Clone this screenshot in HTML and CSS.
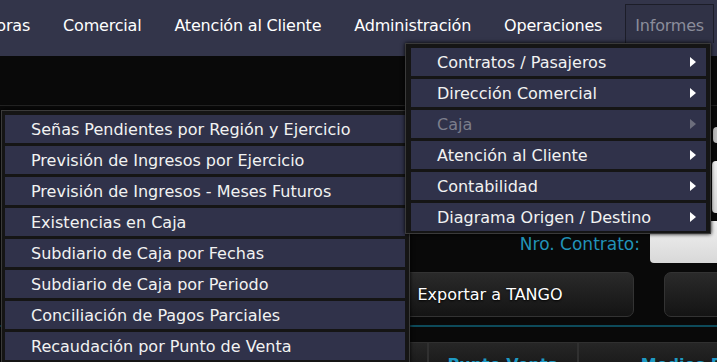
FILE: index.html
```html
<!DOCTYPE html>
<html lang="es">
<head>
  <meta charset="UTF-8">
  <title>Informes - Caja</title>
  <link rel="stylesheet" href="styles.css">
</head>
<body>
  <!-- Barra de navegacion -->
  <header class="nav">
    <a href="#" class="nav-item">Operadoras</a>
    <a href="#" class="nav-item">Comercial</a>
    <a href="#" class="nav-item">Atención al Cliente</a>
    <a href="#" class="nav-item">Administración</a>
    <a href="#" class="nav-item">Operaciones</a>
    <a href="#" class="nav-item active">Informes</a>
  </header>

  <main class="content">
    <div class="band"></div>
    <section class="form">
      <div class="row row-a"><span class="field field-sm"></span></div>
      <div class="row row-b"><span class="field field-md"></span></div>
      <div class="row row-c">
        <label class="label">Nro. Contrato:</label>
        <span class="field field-contrato"></span>
      </div>
      <div class="buttons">
        <button class="btn">Exportar a TANGO</button>
        <button class="btn"></button>
      </div>
      <div class="rule"></div>
      <div class="grid-head">
        <div class="cell cell-first"></div>
        <div class="cell">Punto Venta</div>
        <div class="cell">Medios Pago</div>
      </div>
    </section>
  </main>

  <!-- Menu desplegable Informes -->
  <ul class="menu menu-informes">
    <li class="menu-item">Contratos / Pasajeros <span class="arrow"></span></li>
    <li class="menu-item">Dirección Comercial <span class="arrow"></span></li>
    <li class="menu-item disabled">Caja <span class="arrow"></span></li>
    <li class="menu-item">Atención al Cliente <span class="arrow"></span></li>
    <li class="menu-item">Contabilidad <span class="arrow"></span></li>
    <li class="menu-item">Diagrama Origen / Destino <span class="arrow"></span></li>
  </ul>

  <!-- Submenu Caja -->
  <ul class="menu menu-caja">
    <li class="menu-item">Señas Pendientes por Región y Ejercicio</li>
    <li class="menu-item">Previsión de Ingresos por Ejercicio</li>
    <li class="menu-item">Previsión de Ingresos - Meses Futuros</li>
    <li class="menu-item">Existencias en Caja</li>
    <li class="menu-item">Subdiario de Caja por Fechas</li>
    <li class="menu-item">Subdiario de Caja por Periodo</li>
    <li class="menu-item">Conciliación de Pagos Parciales</li>
    <li class="menu-item">Recaudación por Punto de Venta</li>
  </ul>
</body>
</html>
```

FILE: styles.css
```css
* {
  margin: 0;
  padding: 0;
  box-sizing: border-box;
  font-family: 'DejaVu Sans', Verdana, sans-serif;
}

body {
  width: 717px;
  height: 362px;
  overflow: hidden;
  background-color: #0a0a0a;
  color: #f2f2f2;
  position: relative;
}

/* Navegacion */
.nav {
  height: 56px;
  display: flex;
  justify-content: flex-end;
  align-items: flex-start;
  gap: 13px;
  padding-right: 3px;
  background-color: #33354a;
  overflow: hidden;
}

.nav-item {
  flex-shrink: 0;
  height: 39px;
  margin-top: 4px;
  padding: 11px 9px 0;
  font-size: 16px;
  line-height: 20px;
  letter-spacing: -0.2px;
  color: #ffffff;
  text-decoration: none;
  border: 1px solid transparent;
  border-bottom: none;
}

.nav-item.active {
  color: #8b8d9b;
  border-color: #1c1d28;
  background-color: #303246;
}

/* Contenido de fondo */
.content {
  background-color: #090909;
}

.band {
  height: 50px;
  border-bottom: 1px solid #222222;
}

.form {
  display: flex;
  flex-direction: column;
  align-items: flex-end;
  padding-top: 21px;
}

.row {
  display: flex;
  align-items: center;
  justify-content: flex-end;
}

.field {
  display: block;
  background: linear-gradient(#f2f2f2, #d8d8d8);
  border-radius: 4px;
}

.field-sm {
  width: 10px;
  height: 16px;
  margin-right: -6px;
  background: #bdbdbd;
}

.row-b {
  margin-top: 18px;
}

.field-md {
  width: 10px;
  height: 52px;
  margin-right: -5px;
}

.row-c {
  margin-top: 8px;
  gap: 10px;
}

.label {
  font-size: 17px;
  color: #2192b8;
  padding-top: 4px;
}

.field-contrato {
  width: 80px;
  height: 42px;
  margin-right: -13px;
}

.buttons {
  align-self: stretch;
  display: flex;
  gap: 30px;
  margin-top: 9px;
  margin-left: 346px;
  width: 620px;
}

.btn {
  flex-shrink: 0;
  width: 288px;
  height: 45px;
  border: 1px solid #333333;
  border-radius: 7px;
  background: linear-gradient(#2a2a2a, #141414);
  color: #ffffff;
  font-size: 16px;
  text-shadow: 0 1px 2px #000000;
}

.rule {
  align-self: stretch;
  height: 2px;
  margin-top: 8px;
  background-color: #0d4a5a;
}

.grid-head {
  align-self: stretch;
  display: flex;
  margin-top: 15px;
  margin-left: 380px;
}

.cell {
  height: 40px;
  padding-top: 12px;
  text-align: center;
  font-size: 16px;
  font-weight: bold;
  color: #1e9ac4;
  background: linear-gradient(#262626, #121212);
  border: 1px solid #303030;
  width: 150px;
  flex-shrink: 0;
}

.cell-first {
  width: 48px;
}

.cell:last-child {
  width: 240px;
}

/* Menus */
.menu {
  position: absolute;
  list-style: none;
  display: flex;
  flex-direction: column;
  gap: 3px;
  background-color: #151515;
  border: 1px solid #3a3a3a;
  box-shadow: 0 0 4px #000000;
}

.menu-informes {
  left: 405px;
  top: 43px;
  width: 306px;
  padding: 4px 4px 2px 5px;
  z-index: 3;
}

.menu-caja {
  left: 1px;
  top: 110px;
  width: 409px;
  padding: 4px 4px 4px 3px;
  z-index: 2;
}

.menu-item {
  height: 28px;
  display: flex;
  align-items: center;
  justify-content: space-between;
  padding: 0 10px 0 26px;
  font-size: 16px;
  color: #f2f2f2;
  background-color: #30324a;
}

.menu-item.disabled {
  color: #7c7e8c;
}

.arrow {
  width: 0;
  height: 0;
  border-left: 6px solid #ffffff;
  border-top: 5px solid transparent;
  border-bottom: 5px solid transparent;
}

.menu-item.disabled .arrow {
  border-left-color: #6c6e7c;
}
```
